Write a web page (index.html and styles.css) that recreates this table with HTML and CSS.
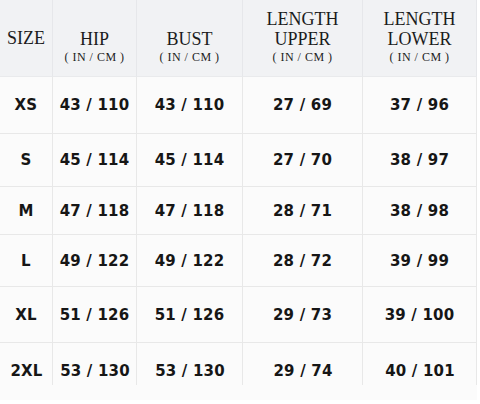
FILE: index.html
```html
<!DOCTYPE html>
<html>
<head>
<meta charset="utf-8">
<link rel="stylesheet" href="styles.css">
</head>
<body>
<div class="chart">
  <div class="cell head single"><span class="title">SIZE</span></div>
  <div class="cell head"><span class="title">HIP</span><span class="unit">( IN / CM )</span></div>
  <div class="cell head"><span class="title">BUST</span><span class="unit">( IN / CM )</span></div>
  <div class="cell head"><span class="title">LENGTH</span><span class="title">UPPER</span><span class="unit">( IN / CM )</span></div>
  <div class="cell head"><span class="title">LENGTH</span><span class="title">LOWER</span><span class="unit">( IN / CM )</span></div>

  <div class="cell r1">XS</div><div class="cell r1">43 / 110</div><div class="cell r1">43 / 110</div><div class="cell r1">27 / 69</div><div class="cell r1">37 / 96</div>
  <div class="cell r2">S</div><div class="cell r2">45 / 114</div><div class="cell r2">45 / 114</div><div class="cell r2">27 / 70</div><div class="cell r2">38 / 97</div>
  <div class="cell r3">M</div><div class="cell r3">47 / 118</div><div class="cell r3">47 / 118</div><div class="cell r3">28 / 71</div><div class="cell r3">38 / 98</div>
  <div class="cell r4">L</div><div class="cell r4">49 / 122</div><div class="cell r4">49 / 122</div><div class="cell r4">28 / 72</div><div class="cell r4">39 / 99</div>
  <div class="cell r5">XL</div><div class="cell r5">51 / 126</div><div class="cell r5">51 / 126</div><div class="cell r5">29 / 73</div><div class="cell r5">39 / 100</div>
  <div class="cell last">2XL</div><div class="cell last">53 / 130</div><div class="cell last">53 / 130</div><div class="cell last">29 / 74</div><div class="cell last">40 / 101</div>
</div>
</body>
</html>
```
FILE: styles.css
```css
html, body {
  margin: 0;
  padding: 0;
  background: #ffffff;
}

.chart {
  width: 477px;
  display: grid;
  grid-template-columns: 53px 84px 106px 120px 114px;
  grid-template-rows: 77px 57px 53px 48px 52px 56px 57px;
}

.cell {
  box-sizing: border-box;
  display: flex;
  align-items: center;
  justify-content: center;
  background: #fbfbfb;
  border-right: 1px solid #e8e8e8;
  border-bottom: 1px solid #e8e8e8;
  font-family: "DejaVu Sans", sans-serif;
  font-weight: bold;
  font-size: 15px;
  letter-spacing: 0.2px;
  color: #161616;
  white-space: nowrap;
}

.head {
  flex-direction: column;
  justify-content: flex-end;
  padding-bottom: 11px;
  background: #f1f2f4;
  border-right-color: #e6e7ea;
  border-bottom-color: #e9eaec;
  font-family: "Liberation Serif", "Times New Roman", serif;
  font-weight: normal;
  letter-spacing: 0;
  color: #1c1c1c;
}

.head.single {
  justify-content: center;
  padding-bottom: 0;
}

.title {
  font-size: 18px;
  line-height: 20px;
}

.unit {
  font-size: 12px;
  line-height: 16px;
  letter-spacing: 0.5px;
}

.last {
  border-right: none;
  border-bottom: none;
  padding-bottom: 2px;
  background: linear-gradient(#e8e8e8, #e8e8e8) right top / 1px 42px no-repeat, #fbfbfb;
}
```
